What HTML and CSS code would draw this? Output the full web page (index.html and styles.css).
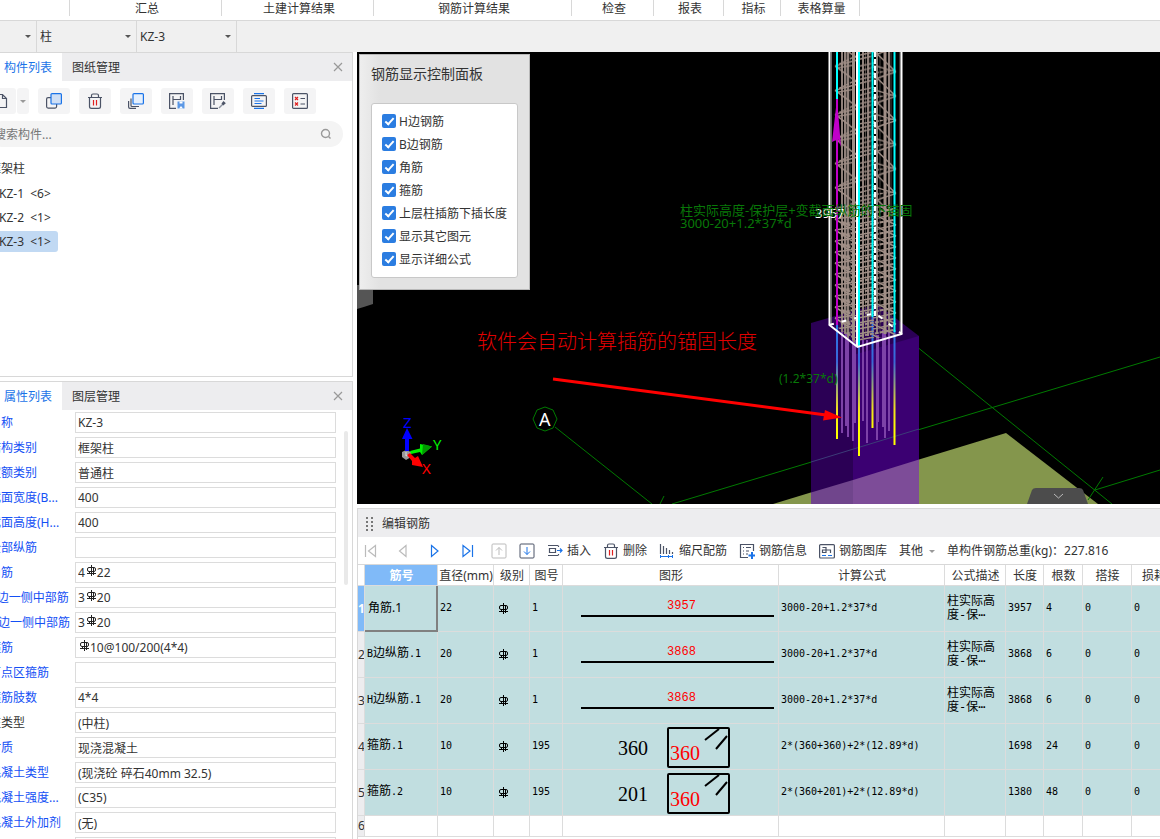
FILE: index.html
```html
<!DOCTYPE html>
<html lang="zh-CN">
<head>
    <meta charset="UTF-8">
    <meta name="viewport" content="width=device-width, initial-scale=1.0">
    <title>编辑钢筋</title>
    <link rel="stylesheet" href="styles.css">
</head>
<body>

    <!-- Shared symbols -->
    <svg class="defs" aria-hidden="true">
        <symbol id="rebar" viewBox="0 0 11 11">
            <path d="M5.500 0V11M3 2.500H8Q9.500 2.500 9.500 4V5Q9.500 6.500 8 6.500H3Q1.500 6.500 1.500 5V4Q1.500 2.500 3 2.500ZM7.500 2.500V10M3.500 6.500V8.500M1 8.500H10" fill="none" stroke="currentColor"/>
        </symbol>
        <symbol id="close" viewBox="0 0 10 10">
            <path d="M1 1L9 9M9 1L1 9" fill="none" stroke="#999" stroke-width="1.2"/>
        </symbol>
        <symbol id="trash" viewBox="0 0 16 16">
            <path d="M1 4.500H15M4.500 4V2.500Q4.500 1 6 1H10Q11.500 1 11.500 2.500V4M2.500 4.500V13.500Q2.500 15.400 4.500 15.400H11.500Q13.500 15.400 13.500 13.500V4.500" fill="none" stroke="#4b5366" stroke-width="1.2"/>
            <path d="M6.500 7V12.500M9.500 7V12.500" stroke="#e02020" stroke-width="1.2"/>
        </symbol>
    </svg>

    <!-- Ribbon group names -->
    <div class="ribbon">
        <span></span>
        <span>汇总</span>
        <span>土建计算结果</span>
        <span>钢筋计算结果</span>
        <span>检查</span>
        <span>报表</span>
        <span>指标</span>
        <span>表格算量</span>
    </div>

    <!-- Component pickers -->
    <div class="pickers">
        <label class="picker first"><select aria-label="楼层"><option></option></select></label>
        <label class="picker"><select aria-label="构件类型"><option>柱</option></select></label>
        <label class="picker"><select aria-label="构件"><option>KZ-3</option></select></label>
    </div>

    <div class="main">
        <div class="sidebar">

            <!-- Component list -->
            <section class="panel components">
                <div class="tabs">
                    <button class="tab active">构件列表</button>
                    <button class="tab">图纸管理</button>
                    <button class="close" aria-label="关闭"><svg><use href="#close"/></svg></button>
                </div>
                <div class="tools">
                    <div class="split">
                        <button class="tool new" aria-label="新建">
                            <svg viewBox="0 0 16 16"><path d="M2.500 1.500H9.500L13.500 5.500V14.500H2.500ZM9.500 1.500V5.500H13.500" fill="none" stroke="#4b5366" stroke-width="1.200"/></svg>
                        </button>
                        <button class="tool drop" aria-label="更多"></button>
                    </div>
                    <button class="tool" aria-label="复制">
                        <svg viewBox="0 0 16 16"><rect x=".6" y="4.600" width="10" height="10.500" rx="1.500" fill="none" stroke="#4b5366" stroke-width="1.200"/><rect x="5" y=".6" width="10.400" height="10.400" rx="1" fill="#cfdff5" stroke="#1a73e8" stroke-width="1.200"/></svg>
                    </button>
                    <button class="tool" aria-label="删除"><svg><use href="#trash"/></svg></button>
                    <button class="tool" aria-label="层间复制">
                        <svg viewBox="0 0 16 16"><path d="M3 5.500V12.500Q3 13.500 4 13.500H11M.6 8V14Q.6 15.400 2 15.400H8" fill="none" stroke="#4b5366" stroke-width="1.200"/><rect x="5" y=".6" width="10.400" height="10.400" rx="1" fill="#e5f0fd" stroke="#1a73e8" stroke-width="1.200"/></svg>
                    </button>
                    <button class="tool" aria-label="存档">
                        <svg viewBox="0 0 16 16"><path d="M7 15.400H.6V.6H14.400V7M4 3V12M11.500 3V7M4 6.500H11.500" fill="none" stroke="#4b5366" stroke-width="1.200"/><rect x="8.500" y="8.500" width="7" height="7" fill="#5b97e5"/><path d="M10.500 8.500H13.500V10.500H10.500ZM10 15.500L12 13L14 15.500Z" fill="#fff"/></svg>
                    </button>
                    <button class="tool" aria-label="提取">
                        <svg viewBox="0 0 16 16"><path d="M8 15.400H.6V.6H14.400V7M4 3V12M11.500 3V7M4 6.500H11.500" fill="none" stroke="#4b5366" stroke-width="1.200"/><path d="M9 15L13 11" stroke="#8b92a0" stroke-width="1.500"/><path d="M11.500 10.500L13.500 8L15.800 10.300L13.300 12.500Z" fill="#4b5366"/></svg>
                    </button>
                    <button class="tool" aria-label="布置">
                        <svg viewBox="0 0 16 16"><rect x=".6" y="2.600" width="14.800" height="10.800" rx="1" fill="none" stroke="#4b5366" stroke-width="1.200"/><path d="M3 .6H13M3 15.400H13M3.500 5.500H9M3.500 8H12.500M3.500 10.500H10.500" stroke="#1a73e8" stroke-width="1.200"/></svg>
                    </button>
                    <button class="tool" aria-label="检查">
                        <svg viewBox="0 0 16 16"><rect x=".6" y=".6" width="14.800" height="14.800" rx="1" fill="none" stroke="#4b5366" stroke-width="1.200"/><path d="M3 4L6 7M6 4L3 7M3 9.500L6 12.500M6 9.500L3 12.500" stroke="#e02020" stroke-width="1.200"/><path d="M8.500 5.500H13M8.500 11H13" stroke="#4b5366" stroke-width="1.200"/></svg>
                    </button>
                </div>
                <div class="search">
                    <input type="text" placeholder="搜索构件..." aria-label="搜索构件">
                    <svg viewBox="0 0 12 12"><circle cx="5.500" cy="5.500" r="4" fill="none" stroke="#999" stroke-width="1.400"/><path d="M8.500 8.500L10.500 10.500" stroke="#999" stroke-width="1.400"/></svg>
                </div>
                <ul class="tree">
                    <li class="group">框架柱</li>
                    <li><span>KZ-1&nbsp; &lt;6&gt;</span></li>
                    <li><span>KZ-2&nbsp; &lt;1&gt;</span></li>
                    <li><span class="selected">KZ-3&nbsp; &lt;1&gt;</span></li>
                </ul>
            </section>

            <!-- Property list -->
            <section class="panel properties">
                <div class="tabs">
                    <button class="tab active">属性列表</button>
                    <button class="tab">图层管理</button>
                    <button class="close" aria-label="关闭"><svg><use href="#close"/></svg></button>
                </div>
                <div class="props">
                    <label class="prop"><span>名称</span><input type="text" value="KZ-3"></label>
                    <label class="prop"><span>结构类别</span><input type="text" value="框架柱"></label>
                    <label class="prop"><span>定额类别</span><input type="text" value="普通柱"></label>
                    <label class="prop"><span>截面宽度(B...</span><input type="text" value="400"></label>
                    <label class="prop"><span>截面高度(H...</span><input type="text" value="400"></label>
                    <label class="prop"><span>全部纵筋</span><input type="text" value=""></label>
                    <label class="prop"><span>角筋</span><input type="text" value="4&emsp;22"><svg class="grade after-digit"><use href="#rebar"/></svg></label>
                    <label class="prop"><span>B边一侧中部筋</span><input type="text" value="3&emsp;20"><svg class="grade after-digit"><use href="#rebar"/></svg></label>
                    <label class="prop"><span>H边一侧中部筋</span><input type="text" value="3&emsp;20"><svg class="grade after-digit"><use href="#rebar"/></svg></label>
                    <label class="prop"><span>箍筋</span><input type="text" value="&emsp;10@100/200(4*4)"><svg class="grade"><use href="#rebar"/></svg></label>
                    <label class="prop"><span>节点区箍筋</span><input type="text" value=""></label>
                    <label class="prop"><span>箍筋肢数</span><input type="text" value="4*4"></label>
                    <label class="prop plain"><span>柱类型</span><input type="text" value="(中柱)"></label>
                    <label class="prop"><span>材质</span><input type="text" value="现浇混凝土"></label>
                    <label class="prop"><span>混凝土类型</span><input type="text" value="(现浇砼 碎石40mm 32.5)"></label>
                    <label class="prop"><span>混凝土强度...</span><input type="text" value="(C35)"></label>
                    <label class="prop"><span>混凝土外加剂</span><input type="text" value="(无)"></label>
                    <label class="prop"><span></span><input type="text" value="" aria-label="泵送类型"></label>
                </div>
                <div class="scrollbar"></div>
            </section>
        </div>

        <div class="workspace">

            <!-- 3D view -->
            <div class="view">
                <svg class="scene" viewBox="357 52 803 452" preserveAspectRatio="xMinYMin slice">
                    <defs>
                        <linearGradient id="dowel" gradientUnits="userSpaceOnUse" x1="0" y1="325" x2="0" y2="430">
                            <stop offset="0" stop-color="#2a78e8"/>
                            <stop offset=".35" stop-color="#3a68d8"/>
                            <stop offset=".8" stop-color="#f0e020"/>
                            <stop offset="1" stop-color="#ffff00"/>
                        </linearGradient>
                        <pattern id="tiesWide" patternUnits="userSpaceOnUse" x="834" y="52" width="64" height="24.300">
                            <path d="M1 14L23 30M1 -10L23 6M1 14L23 8M2 16L20 13M39 -2L62 20M39 22L62 44M39 13L62 20M62 20L40 27M62 -4L40 3" fill="none" stroke="#a08e86" stroke-width="1.400"/>
                            <path d="M26 3L40 0M26 7L38 4M26 14L40 11M26 19L40 15M5 12L22 4M26 23L62 18" fill="none" stroke="#a08e86" stroke-width="1.400" stroke-dasharray="3 1"/>
                        </pattern>
                        <pattern id="tiesTight" patternUnits="userSpaceOnUse" x="834" y="205" width="64" height="11">
                            <path d="M1 3L23 17M1 -8L23 6M1 3L23 0M39 -2L62 9M39 9L62 20M62 9L39 14M62 -2L39 3M24 3L40 0M24 8L40 5" fill="none" stroke="#a08e86" stroke-width="1.500"/>
                            <path d="M7 9L22 5M26 10L60 4M8 6L20 11" fill="none" stroke="#a08e86" stroke-width="2" stroke-dasharray="4 1"/>
                        </pattern>
                    </defs>
                    <rect x="357" y="52" width="803" height="452" fill="#000"/>

                    <!-- slab -->
                    <path d="M773 504L1006 433L1098 504Z" fill="#84964c"/>

                    <!-- axis lines -->
                    <g fill="none" stroke="#007a00">
                        <path d="M555 427L652 504M660 504L664 496M672 504L1160 357M880 317L1112 504M1095 490L1160 470M1103 477L1088 500"/>
                        <path d="M545 407L553 410L557 419L553 428L545 431L537 428L533 419L537 410Z"/>
                    </g>
                    <text x="539" y="426" class="axis-name">A</text>

                    <!-- footing -->
                    <path d="M811 323L877 304L919 336V504H811Z" fill="#2b0055"/>
                    <path d="M853 355L919 336V504H853Z" fill="#3b0072"/>
                    <path d="M811 492.500L853 480V504H811Z" fill="#70458c"/>
                    <path d="M853 480L919 459.500V504H853Z" fill="#7d4c98"/>
                    <path d="M811 462L919 429" stroke="#3c3c78"/>
                    <path d="M842 330V433M846 330V426M848 330V437M853 340V441M855 340V423M863 340V421M867 340V443M877 335V440M878 335V422M883 330V427M885 330V438M889 330V431" stroke="#7d42a8" stroke-width="2"/>
                    <path d="M836 325H838V439H836ZM858 345H860V456H858ZM871.500 317H873.500V428H871.500ZM893.500 330H895.500V445H893.500Z" fill="url(#dowel)"/>

                    <!-- column cage -->
                    <path d="M846.500 52V334M850 52V336M865.500 52V336M870 52V334M880 52V334M891 52V330" stroke="#4a4440"/>
                    <path d="M842 52V332M845 52V334M848 52V338M854 52V342M863 52V338M868 52V336M877 52V334M889 52V332" stroke="#8f807a" stroke-width="2"/>
                    <path d="M853.500 52V340M885 52V334" stroke="#a08e86" stroke-width="3"/>
                    <path d="M834 52H898V205H834Z" fill="url(#tiesWide)"/>
                    <path d="M834 205H898V334L858 342L834 325Z" fill="url(#tiesTight)"/>
                    <path d="M831.500 52V324M900 52V334" stroke="#686868"/>
                    <path d="M875 52V317" stroke="#fff" stroke-width="2" stroke-dasharray="5 2"/>
                    <path d="M829 325L875 313L902 334" fill="none" stroke="#fff" stroke-width="2" stroke-dasharray="5 8"/>
                    <path d="M837 52V99M859 52V346M872.500 52V317M894.500 52V332" stroke="#00ffff" stroke-width="2"/>
                    <path d="M829.500 52V325L857.500 347L901.500 334V52M857 52V347" fill="none" stroke="#fff" stroke-width="2"/>
                    <path d="M837 99V325" stroke="#c000c8" stroke-width="2"/>
                    <path d="M837 99L832 142L836 140L837 136L841 147Z" fill="#c000c8"/>

                    <!-- labels -->
                    <text x="815" y="218" class="mark white">3957</text>
                    <text x="680" y="215" class="mark">柱实际高度-保护层+变截面纵筋的下锚固</text>
                    <text x="680" y="228" class="mark">3000-20+1.2*37*d</text>
                    <text x="779" y="383" class="mark small">(1.2*37*d)</text>
                    <text x="477" y="349" class="note">软件会自动计算插筋的锚固长度</text>
                    <path d="M553 379L826 415" stroke="#f00" stroke-width="3"/>
                    <path d="M842 417.500L823 420.500L825 410Z" fill="#f00"/>

                    <!-- axis tripod -->
                    <path d="M402 452L406 450L411 452V457L406 460L402 457Z" fill="#999"/>
                    <path d="M406 452V456L410 454" stroke="#ddd" fill="none"/>
                    <path d="M405 451V439H402L407 428L412.500 439H409V451Z" fill="#0000ff"/>
                    <path d="M410 451L420 448.500V444L432 446.500L422 455L420 452L411 454Z" fill="#00f000"/>
                    <path d="M423 444L432 446.500L422 455Z" fill="#009a00"/>
                    <path d="M407 455L410 453L415 458L418 456L423 467L412 465L412 461Z" fill="#f00"/>
                    <text x="403" y="428" class="xyz z">Z</text>
                    <text x="433" y="450" class="xyz y">Y</text>
                    <text x="422" y="474" class="xyz x">X</text>

                    <!-- pull tabs -->
                    <path d="M357 285H373V304Q364 307 357 309Z" fill="#555"/>
                    <path d="M1027 504L1032 490Q1033 488 1036 488H1079Q1082 488 1083 490L1088 504Z" fill="#4c4c4c"/>
                    <path d="M1054 494L1058.500 498L1063 494" fill="none" stroke="#bbb"/>
                </svg>

                <div class="display-panel">
                    <h2>钢筋显示控制面板</h2>
                    <div class="checks">
                        <label><input type="checkbox" checked>H边钢筋</label>
                        <label><input type="checkbox" checked>B边钢筋</label>
                        <label><input type="checkbox" checked>角筋</label>
                        <label><input type="checkbox" checked>箍筋</label>
                        <label><input type="checkbox" checked>上层柱插筋下插长度</label>
                        <label><input type="checkbox" checked>显示其它图元</label>
                        <label><input type="checkbox" checked>显示详细公式</label>
                    </div>
                </div>
            </div>

            <!-- Rebar editor -->
            <section class="editor">
                <div class="editor-title">
                    <svg viewBox="0 0 8 15"><path d="M1 0V15M6 0V15" stroke="#777" stroke-width="2" stroke-dasharray="2 2"/></svg>
                    编辑钢筋
                </div>
                <div class="editor-tools">
                    <div class="nav">
                        <button aria-label="第一条"><svg viewBox="0 0 16 16"><path d="M2.500 2V14M12.500 2.500L5.500 8L12.500 13.500Z" fill="none" stroke="#bbb" stroke-width="1.200"/></svg></button>
                        <button aria-label="上一条"><svg viewBox="0 0 16 16"><path d="M11 2.500L4.500 8L11 13.500Z" fill="none" stroke="#bbb" stroke-width="1.200"/></svg></button>
                        <button aria-label="下一条"><svg viewBox="0 0 16 16"><path d="M4.500 2.500L11 8L4.500 13.500Z" fill="none" stroke="#1a73e8" stroke-width="1.200"/></svg></button>
                        <button aria-label="最后一条"><svg viewBox="0 0 16 16"><path d="M13.500 2V14M4 2.500L11 8L4 13.500Z" fill="none" stroke="#1a73e8" stroke-width="1.200"/></svg></button>
                    </div>
                    <div class="move">
                        <button aria-label="上移"><svg viewBox="0 0 16 16"><rect x="1" y="1" width="14" height="14" rx="1" fill="none" stroke="#bbb"/><path d="M8 12V4.500M5 7.500L8 4.500L11 7.500" fill="none" stroke="#bbb"/></svg></button>
                        <button aria-label="下移"><svg viewBox="0 0 16 16"><rect x="1" y="1" width="14" height="14" rx="1" fill="none" stroke="#4b5366"/><path d="M8 4V11.500M5 8.500L8 11.500L11 8.500" fill="none" stroke="#1a73e8"/></svg></button>
                    </div>
                    <button class="cmd"><svg viewBox="0 0 16 16"><path d="M1 2.500H11M1 12.500H11M2.500 5.500H8.500V9.500H2.500ZM11.500 2.500V4M11.500 11V12.500" fill="none" stroke="#4b5366" stroke-width="1.200"/><path d="M10 7.500H15M13 5.500L15 7.500L13 9.500" fill="none" stroke="#1a73e8" stroke-width="1.200"/></svg>插入</button>
                    <button class="cmd"><svg><use href="#trash"/></svg>删除</button>
                    <button class="cmd"><svg viewBox="0 0 16 16"><path d="M1.500 1V11M4.500 3V11M7.500 5V11M10.500 7V11M13.500 9V11" stroke="#4b5366" stroke-width="1.200"/><path d="M1 13.500H14M1.500 12V15M9.500 12V15M13.500 12V15" stroke="#1a73e8"/></svg>缩尺配筋</button>
                    <button class="cmd"><svg viewBox="0 0 16 16"><path d="M9 14.500H1.500V1.500H14.500V8M4 4.500H5M7 4.500H12M4 8H5M7 8H10M4 11H5M7 11H9" fill="none" stroke="#4b5366" stroke-width="1.200"/><path d="M13 9V16M9.500 12.500H16" stroke="#1a73e8" stroke-width="2"/></svg>钢筋信息</button>
                    <button class="cmd"><svg viewBox="0 0 16 16"><rect x=".6" y="1.600" width="14.800" height="13.400" rx="1" fill="none" stroke="#4b5366" stroke-width="1.200"/><path d="M3.500 4.500H7V9.500H3.500V7H11.500V10" fill="none" stroke="#4b5366" stroke-width="1.200"/><path d="M3 12.500H7M9 12.500H13" stroke="#1a73e8" stroke-width="1.200"/></svg>钢筋图库</button>
                    <button class="cmd more">其他</button>
                    <span class="total">单构件钢筋总重(kg)：227.816</span>
                </div>
                <div class="grid">
                    <table>
                        <colgroup>
                            <col class="w-num"><col class="w-name"><col class="w-dia"><col class="w-grade"><col class="w-fig"><col class="w-shape"><col class="w-formula"><col class="w-desc"><col class="w-len"><col class="w-count"><col class="w-lap"><col class="w-loss">
                        </colgroup>
                        <thead>
                            <tr>
                                <th></th>
                                <th class="current">筋号</th>
                                <th>直径(mm)</th>
                                <th>级别</th>
                                <th>图号</th>
                                <th>图形</th>
                                <th>计算公式</th>
                                <th>公式描述</th>
                                <th>长度</th>
                                <th>根数</th>
                                <th>搭接</th>
                                <th>损耗(%)</th>
                            </tr>
                        </thead>
                        <tbody>
                            <tr>
                                <th class="current">1</th>
                                <td class="focus">角筋.1</td>
                                <td>22</td>
                                <td class="level"><svg><use href="#rebar"/></svg></td>
                                <td>1</td>
                                <td class="shape"><div class="bar">3957</div></td>
                                <td>3000-20+1.2*37*d</td>
                                <td class="desc">柱实际高<br>度-保⋯</td>
                                <td>3957</td>
                                <td>4</td>
                                <td>0</td>
                                <td>0</td>
                            </tr>
                            <tr>
                                <th>2</th>
                                <td>B<span class="cn">边纵筋</span>.1</td>
                                <td>20</td>
                                <td class="level"><svg><use href="#rebar"/></svg></td>
                                <td>1</td>
                                <td class="shape"><div class="bar">3868</div></td>
                                <td>3000-20+1.2*37*d</td>
                                <td class="desc">柱实际高<br>度-保⋯</td>
                                <td>3868</td>
                                <td>6</td>
                                <td>0</td>
                                <td>0</td>
                            </tr>
                            <tr>
                                <th>3</th>
                                <td>H<span class="cn">边纵筋</span>.1</td>
                                <td>20</td>
                                <td class="level"><svg><use href="#rebar"/></svg></td>
                                <td>1</td>
                                <td class="shape"><div class="bar">3868</div></td>
                                <td>3000-20+1.2*37*d</td>
                                <td class="desc">柱实际高<br>度-保⋯</td>
                                <td>3868</td>
                                <td>6</td>
                                <td>0</td>
                                <td>0</td>
                            </tr>
                            <tr>
                                <th>4</th>
                                <td><span class="cn">箍筋</span>.1</td>
                                <td>10</td>
                                <td class="level"><svg><use href="#rebar"/></svg></td>
                                <td>195</td>
                                <td class="shape"><div class="stirrup"><span>360</span><div class="box">360<svg viewBox="0 0 24 22"><path d="M1 11L15 0M12 20L23 7" stroke="#000" stroke-width="2"/></svg></div></div></td>
                                <td>2*(360+360)+2*(12.89*d)</td>
                                <td></td>
                                <td>1698</td>
                                <td>24</td>
                                <td>0</td>
                                <td>0</td>
                            </tr>
                            <tr>
                                <th>5</th>
                                <td><span class="cn">箍筋</span>.2</td>
                                <td>10</td>
                                <td class="level"><svg><use href="#rebar"/></svg></td>
                                <td>195</td>
                                <td class="shape"><div class="stirrup"><span>201</span><div class="box">360<svg viewBox="0 0 24 22"><path d="M1 11L15 0M12 20L23 7" stroke="#000" stroke-width="2"/></svg></div></div></td>
                                <td>2*(360+201)+2*(12.89*d)</td>
                                <td></td>
                                <td>1380</td>
                                <td>48</td>
                                <td>0</td>
                                <td>0</td>
                            </tr>
                            <tr class="empty">
                                <th>6</th>
                                <td></td><td></td><td></td><td></td><td></td><td></td><td></td><td></td><td></td><td></td><td></td>
                            </tr>
                        </tbody>
                    </table>
                </div>
            </section>
        </div>
    </div>

</body>
</html>
```
FILE: styles.css
```css
* {
    box-sizing: border-box;
}

body {
    display: flex;
    flex-direction: column;
    height: 100vh;
    margin: 0;
    overflow: hidden;
    background-color: #fff;
    color: #333;
    font-family: "Noto Sans", "Noto Sans CJK SC", sans-serif;
    font-size: 12px;
    line-height: 16px;
}

button, input, select {
    margin: 0;
    padding: 0;
    border: none;
    background: none;
    color: inherit;
    font: inherit;
}

svg {
    display: block;
    flex: none;
}

.defs {
    position: absolute;
    width: 0;
    height: 0;
}

/* Ribbon */
.ribbon {
    display: grid;
    grid-template-columns: 70px 152px 152px 198px 82px 70px 57px 79px;
    height: 20px;
    flex: none;
}

.ribbon span {
    height: 16px;
    padding-left: 3px;
    border-right: 1px solid #d8d8d8;
    line-height: 18px;
    text-align: center;
}

/* Pickers */
.pickers {
    display: flex;
    flex: none;
    height: 32px;
    border-top: 1px solid #d8d8d8;
    background-color: #f0f0f0;
}

.picker {
    position: relative;
    width: 100px;
    border-right: 1px solid #d8d8d8;
}

.picker.first {
    width: 37px;
}

.picker select {
    width: 100%;
    height: 100%;
    padding-left: 3px;
    appearance: none;
}

.picker::after,
.drop::after,
.more::after {
    content: "";
    border: 3px solid transparent;
    border-top: 3px solid #555;
    border-bottom: none;
}

.picker::after {
    position: absolute;
    top: 14px;
    right: 5px;
}

/* Page columns */
.main {
    display: flex;
    flex: 1;
    gap: 4px;
    min-height: 0;
}

.sidebar {
    display: flex;
    flex-direction: column;
    flex: none;
    gap: 4px;
    width: 365px;
    margin-left: -12px;
}

.panel {
    position: relative;
    overflow: hidden;
    border: 1px solid #d8d8d8;
}

.components {
    flex: none;
    height: 325px;
}

.properties {
    flex: 1;
    border-bottom: none;
}

.tabs {
    display: flex;
    align-items: center;
    height: 28px;
    background-color: #ededef;
}

.tab {
    height: 28px;
    padding: 2px 10px 0;
}

.tab.active {
    width: 73px;
    padding: 2px 10px 0 15px;
    background-color: #fff;
    color: #1a73e8;
}

.close {
    margin-left: auto;
    padding-right: 9px;
}

.close svg {
    width: 10px;
    height: 10px;
}

.tools {
    display: flex;
    gap: 9px;
    padding: 7px 0 7px 11px;
}

.split {
    display: flex;
    gap: 1px;
    width: 29px;
    justify-content: flex-end;
}

.tool {
    display: flex;
    align-items: center;
    justify-content: center;
    flex: none;
    width: 32px;
    height: 26px;
    border-radius: 3px;
    background-color: #f4f4f5;
}

.tool svg {
    width: 16px;
    height: 16px;
}

.tool.new {
    justify-content: flex-end;
    padding-right: 7px;
}

.tool.drop {
    width: 12px;
}

.search {
    display: flex;
    align-items: center;
    width: 354px;
    height: 26px;
    padding: 0 11px 0 5px;
    border-radius: 13px;
    background-color: #f4f4f4;
}

.search input {
    flex: 1;
    padding-top: 2px;
}

.search input::placeholder {
    color: #777;
}

.search svg {
    width: 12px;
    height: 12px;
}

.tree {
    margin: 0;
    padding: 10px 0;
    list-style: none;
}

.tree li {
    display: flex;
    align-items: center;
    height: 24px;
    padding-left: 8px;
}

.tree .group {
    padding-left: 0;
}

.tree span {
    padding: 3px 7px 2px 2px;
    border-radius: 3px;
}

.tree .selected {
    background-color: #c1d9f3;
}

/* Properties */
.props {
    display: flex;
    flex-direction: column;
    gap: 4px;
    padding-top: 2px;
}

.prop {
    position: relative;
    display: grid;
    grid-template-columns: 86px 261px;
    align-items: center;
    height: 21px;
    color: #1450f5;
    white-space: nowrap;
}

.prop.plain {
    color: #333;
}

.prop input {
    height: 21px;
    padding: 0 2px;
    border: 1px solid #dcdcdc;
    color: #333;
}

.grade {
    position: absolute;
    top: 3px;
    left: 90px;
    width: 11px;
    height: 11px;
    color: #222;
}

.grade.after-digit {
    left: 97px;
}

.scrollbar {
    position: absolute;
    top: 49px;
    right: 4px;
    width: 4px;
    height: 154px;
    border-radius: 2px;
    background-color: #e9e9e9;
}

/* 3D view */
.workspace {
    display: flex;
    flex-direction: column;
    flex: 1;
    gap: 4px;
    min-width: 0;
}

.view {
    position: relative;
    flex: 1;
    min-height: 0;
    background-color: #000;
}

.scene {
    width: 100%;
    height: 100%;
}

.mark {
    fill: #087808;
    font-size: 13px;
}

.mark.small {
    font-size: 12px;
}

.mark.white {
    fill: #fff;
}

.axis-name {
    fill: #fff;
    font-size: 18px;
}

.note {
    fill: #e00000;
    font-family: "Noto Sans CJK SC", sans-serif;
    font-size: 20px;
    font-weight: 300;
}

.xyz {
    font-size: 15px;
}

.z {
    fill: #0000ff;
}

.y {
    fill: #00f000;
}

.x {
    fill: #ff0000;
}

.display-panel {
    position: absolute;
    top: 2px;
    left: 2px;
    width: 171px;
    padding: 10px 11px 11px;
    border: 1px solid #b8b8b8;
    background: linear-gradient(to right, #eee, #e2e2e2 20px);
}

.display-panel h2 {
    margin: 0 0 21px;
    font-size: 14px;
    font-weight: normal;
    line-height: 17px;
}

.checks {
    width: 147px;
    padding: 6px 10px;
    border: 1px solid #c8c8c8;
    border-radius: 3px;
    background-color: #fff;
}

.checks label {
    display: flex;
    align-items: center;
    gap: 3px;
    height: 23px;
    white-space: nowrap;
}

.checks input {
    display: flex;
    justify-content: center;
    flex: none;
    width: 14px;
    height: 14px;
    margin-bottom: 1px;
    border-radius: 2px;
    background-color: #2b7de1;
    appearance: none;
}

.checks input::after {
    content: "";
    box-sizing: border-box;
    width: 5px;
    height: 9px;
    margin-top: 2px;
    border: solid #fff;
    border-width: 0 2px 2px 0;
    transform: rotate(42deg);
}

/* Rebar editor */
.editor {
    flex: none;
    height: 331px;
    overflow: hidden;
    border-top: 1px solid #d8d8d8;
    border-left: 1px solid #d8d8d8;
}

.editor-title {
    display: flex;
    align-items: center;
    gap: 8px;
    height: 28px;
    padding: 2px 0 0 8px;
    background-color: #ededef;
}

.editor-title svg {
    width: 8px;
    height: 15px;
}

.editor-tools {
    display: flex;
    align-items: center;
    gap: 12px;
    height: 27px;
    padding: 1px 0 0 5px;
    white-space: nowrap;
}

.nav,
.move {
    display: flex;
    gap: 16px;
}

.move {
    gap: 12px;
    margin-left: 4px;
}

.nav svg,
.move svg,
.cmd svg {
    width: 16px;
    height: 16px;
}

.cmd {
    display: flex;
    align-items: center;
    gap: 4px;
}

.more {
    gap: 6px;
}

.more::after,
.drop::after {
    border-top-color: #999;
}

.grid {
    overflow: hidden;
}

table {
    width: 835px;
    table-layout: fixed;
    border-collapse: separate;
    border-spacing: 0;
    border-top: 1px solid #d8d8d8;
}

.w-num { width: 7px; }
.w-name { width: 73px; }
.w-dia { width: 56px; }
.w-grade { width: 36px; }
.w-fig { width: 33px; }
.w-shape { width: 216px; }
.w-formula { width: 166px; }
.w-desc { width: 61px; }
.w-len { width: 38px; }
.w-count { width: 39px; }
.w-lap { width: 49px; }
.w-loss { width: 61px; }

th, td {
    overflow: hidden;
    padding: 0;
    border-right: 1px solid #dcdcdc;
    border-bottom: 1px solid #dcdcdc;
    font-weight: normal;
    white-space: nowrap;
}

thead th {
    height: 21px;
    padding: 2px 0 0 1px;
}

tbody th {
    background-color: #ededef;
}

th.current {
    background-color: #80baf8;
    color: #fff;
    font-weight: bold;
}

td {
    height: 46px;
    padding: 0 2px 2px;
    background-color: #c1dee0;
    color: #000;
    font-family: "DejaVu Sans Mono", "Noto Sans CJK SC", monospace;
    font-size: 10px;
}

td.focus {
    padding: 0 3px;
    border-right: 2px solid #808080;
    border-bottom: 2px solid #808080;
    font-family: "Noto Sans", "Noto Sans CJK SC", sans-serif;
    font-size: 12px;
}

.cn {
    font-size: 12px;
}

td.desc {
    font-size: 12px;
    line-height: 14px;
}

td.level {
    padding: 0 0 0 4px;
}

td.level svg {
    width: 11px;
    height: 11px;
}

td.shape {
    padding: 0;
}

.bar {
    width: 193px;
    margin: 0 auto 4px 18px;
    padding-left: 8px;
    border-bottom: 2px solid #000;
    color: #f00;
    font-family: "Liberation Mono", monospace;
    font-size: 12px;
    line-height: 18px;
    text-align: center;
}

.stirrup {
    display: flex;
    align-items: center;
    justify-content: flex-end;
    gap: 19px;
    padding: 2px 48px 0 0;
    font-family: "Liberation Serif", serif;
    font-size: 20px;
}

.box {
    position: relative;
    width: 63px;
    height: 41px;
    padding: 14px 1px 0;
    border: 2px solid #000;
    border-radius: 2px;
    color: #f00;
    line-height: 20px;
}

.box svg {
    position: absolute;
    top: 0;
    right: 0;
    width: 24px;
    height: 22px;
}

.empty td {
    height: 21px;
    padding: 0;
    background-color: #fff;
}
```
